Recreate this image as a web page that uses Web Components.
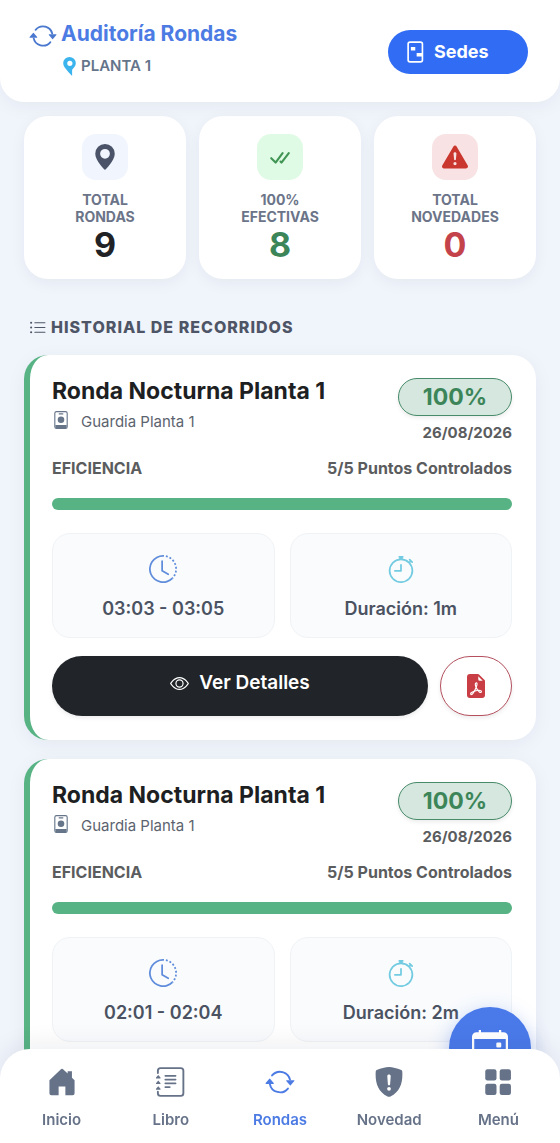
<!DOCTYPE html>
<html lang="es">
<head>
<meta charset="utf-8">
<meta name="viewport" content="width=device-width, initial-scale=1">
<title>Auditoría Rondas</title>
<style>
  html, body { margin: 0; height: 100%; }
  body { font-family: Inter, "Liberation Sans", sans-serif; background: #f0f4fb; color: #212529; }
</style>
</head>
<body>
<audit-app></audit-app>
<script>
const ICONS = {
  repeat: '<path d="M11.534 7h3.932a.25.25 0 0 1 .192.41l-1.966 2.36a.25.25 0 0 1-.384 0l-1.966-2.36a.25.25 0 0 1 .192-.41m-11 2h3.932a.25.25 0 0 0 .192-.41L2.692 6.23a.25.25 0 0 0-.384 0L.342 8.59A.25.25 0 0 0 .534 9"/><path d="M8 3c-1.552 0-2.94.707-3.857 1.818a.5.5 0 1 1-.771-.636A6.002 6.002 0 0 1 13.917 7H12.9A5 5 0 0 0 8 3M3.1 9a5.002 5.002 0 0 0 8.757 2.182.5.5 0 1 1 .771.636A6.002 6.002 0 0 1 2.083 9z"/>',
  pin: '<path d="M8 16s6-5.686 6-10A6 6 0 0 0 2 6c0 4.314 6 10 6 10m0-7a3 3 0 1 1 0-6 3 3 0 0 1 0 6"/>',
  flagpin: '<path fill-rule="evenodd" d="M8 0a5.300 5.300 0 0 1 5.300 5.300c0 2.300-1.700 4-3.100 5.400V16L7 12.600C4.700 9.800 2.700 8 2.700 5.300A5.300 5.300 0 0 1 8 0m.3 3.100a2.200 2.200 0 1 0 0 4.400 2.200 2.200 0 0 0 0-4.400"/>',
  door: '<rect x="3" y=".8" width="10.400" height="14.400" rx="1.400" fill="none" stroke="currentColor" stroke-width="1.200"/><path d="M5 4.300h3.200v2.600H5zM9.200 8.700h4v2.600h-4z"/>',
  checks: '<path d="M2.600 8.700 5.300 11.400 9.600 5.600M8.300 10.800 8.900 11.400 13.400 5.600" fill="none" stroke="currentColor" stroke-width="1.300" stroke-linecap="round" stroke-linejoin="round"/>',
  warning: '<path d="M8.982 1.566a1.130 1.130 0 0 0-1.960 0L.165 13.233c-.457.778.091 1.767.980 1.767h13.713c.889 0 1.438-.990.980-1.767zM8 5c.535 0 .954.462.900.995l-.350 3.507a.552.552 0 0 1-1.100 0L7.100 5.995A.905.905 0 0 1 8 5m.002 6a1 1 0 1 1 0 2 1 1 0 0 1 0-2"/>',
  list: '<path d="M5.500 3.500h9.500M5.500 8h9.500M5.500 12.500h9.500" fill="none" stroke="currentColor" stroke-width="1" stroke-linecap="round"/><circle cx="2" cy="3.500" r="1"/><circle cx="2" cy="8" r="1"/><circle cx="2" cy="12.500" r="1"/>',
  badge: '<rect x="2.500" y=".5" width="11" height="15" rx="1.500" fill="none" stroke="currentColor"/><path d="M6 2h4v1H6zM3 12.400h10V14a1.500 1.500 0 0 1-1.500 1.500h-7A1.500 1.500 0 0 1 3 14z"/><circle cx="8" cy="7.800" r="2.900"/>',
  clock: '<path d="M8.515 1.019A7 7 0 0 0 8 1V0a8 8 0 0 1 .589.022zm2.004.45a7 7 0 0 0-.985-.299l.219-.976q.576.129 1.126.342zm1.37.71a7 7 0 0 0-.439-.27l.493-.87a8 8 0 0 1 .979.654l-.615.789a7 7 0 0 0-.418-.302zm1.834 1.79a7 7 0 0 0-.653-.796l.724-.69q.406.429.747.91zm.744 1.352a7 7 0 0 0-.214-.468l.893-.45a8 8 0 0 1 .45 1.088l-.95.313a7 7 0 0 0-.179-.483m.53 2.507a7 7 0 0 0-.1-1.025l.985-.17q.1.58.116 1.17zm-.131 1.538q.05-.254.081-.51l.993.123a8 8 0 0 1-.23 1.155l-.964-.267q.069-.247.12-.501m-.952 2.379q.276-.436.486-.908l.914.405q-.24.54-.555 1.038zm-.964 1.205q.183-.183.35-.378l.758.653a8 8 0 0 1-.401.432z"/><path d="M8 1a7 7 0 1 0 4.950 11.950l.707.707A8.001 8.001 0 1 1 8 0z"/><path d="M7.500 3a.5.5 0 0 1 .5.5v5.210l3.248 1.856a.5.5 0 0 1-.496.868l-3.500-2A.5.5 0 0 1 7 9V3.500a.5.5 0 0 1 .5-.5"/>',
  stopwatch: '<path d="M8.500 5.600a.5.5 0 1 0-1 0v2.900h-3a.5.5 0 0 0 0 1H8a.5.5 0 0 0 .5-.5z"/><path d="M6.500 1A.5.5 0 0 1 7 .5h2a.5.5 0 0 1 0 1v.57c1.360.196 2.594.78 3.584 1.640l.012-.013.354-.354-.354-.353a.5.5 0 0 1 .707-.708l1.414 1.415a.5.5 0 1 1-.707.707l-.353-.354-.354.354-.013.012A7 7 0 1 1 7 2.071V1.500a.5.5 0 0 1-.5-.5M8 3a6 6 0 1 0 .001 12A6 6 0 0 0 8 3"/>',
  eye: '<path d="M16 8s-3-5.500-8-5.500S0 8 0 8s3 5.500 8 5.500S16 8 16 8M1.173 8a13 13 0 0 1 1.660-2.043C4.120 4.668 5.880 3.500 8 3.500s3.879 1.168 5.168 2.457A13 13 0 0 1 14.828 8q-.086.13-.195.288c-.335.48-.83 1.120-1.465 1.755C11.879 11.332 10.119 12.500 8 12.500s-3.879-1.168-5.168-2.457A13 13 0 0 1 1.172 8z"/><path d="M8 5.500a2.500 2.500 0 1 0 0 5 2.500 2.500 0 0 0 0-5M4.500 8a3.500 3.500 0 1 1 7 0 3.500 3.500 0 0 1-7 0"/>',
  pdf: '<path d="M5.523 12.424q.21-.124.459-.238a8 8 0 0 1-.45.606c-.28.337-.498.516-.635.572l-.035.012a.3.3 0 0 1-.026-.044c-.056-.11-.054-.216.04-.36.106-.165.319-.354.647-.548m2.455-1.647q-.178.037-.356.078a21 21 0 0 0 .5-1.050 12 12 0 0 0 .51.858q-.326.048-.654.114m2.525.939a4 4 0 0 1-.435-.41q.344.007.612.054c.317.057.466.147.518.209a.1.1 0 0 1 .026.064.44.44 0 0 1-.06.2.3.3 0 0 1-.094.124.1.1 0 0 1-.069.015c-.09-.003-.258-.066-.498-.256M8.278 6.970c-.04.244-.108.524-.2.829a5 5 0 0 1-.089-.346c-.076-.353-.087-.63-.046-.822.038-.177.11-.248.196-.283a.5.5 0 0 1 .145-.04c.013.03.028.092.032.198q.008.183-.038.465z"/><path fill-rule="evenodd" d="M4 0h5.293A1 1 0 0 1 10 .293L13.707 4a1 1 0 0 1 .293.707V14a2 2 0 0 1-2 2H4a2 2 0 0 1-2-2V2a2 2 0 0 1 2-2m5.500 1.500v2a1 1 0 0 0 1 1h2zM4.165 13.668c.09.18.23.343.438.419.207.075.412.04.58-.03.318-.13.635-.436.926-.786.333-.401.683-.927 1.021-1.510a11.700 11.700 0 0 1 1.997-.406c.3.383.61.713.91.95.28.22.603.403.934.417a.86.86 0 0 0 .51-.138c.155-.101.27-.247.354-.416.09-.181.145-.37.138-.563a.84.84 0 0 0-.2-.518c-.226-.27-.596-.4-.96-.465a5.800 5.800 0 0 0-1.335-.05 11 11 0 0 1-.98-1.686c.25-.66.437-1.284.52-1.794.036-.218.055-.426.048-.614a1.240 1.240 0 0 0-.127-.538.7.7 0 0 0-.477-.365c-.202-.043-.41 0-.601.077-.377.15-.576.47-.651.823-.073.34-.04.736.046 1.136.088.406.238.848.43 1.295a20 20 0 0 1-1.062 2.227 7.700 7.700 0 0 0-1.482.645c-.37.22-.699.48-.897.787-.21.326-.275.714-.08 1.103"/>',
  house: '<path d="M7.300 1.300a1 1 0 0 1 1.400 0L11 3.500V2.300h2.300v3.400l1.400 1.400V14a1 1 0 0 1-1 1H9.800v-4.600H6.200V15H2.300a1 1 0 0 1-1-1V7.100z"/>',
  journal: '<g transform="translate(-.8)"><g fill="none" stroke="currentColor" stroke-width="1" stroke-linecap="round"><path d="M1.800 3.200V2A1.400 1.400 0 0 1 3.200.6H14A1.400 1.400 0 0 1 15.400 2v12A1.400 1.400 0 0 1 14 15.400H3.200A1.400 1.400 0 0 1 1.800 14v-.8M5.800 4.700h5.400M5.800 6.700h5.400M5.800 8.700h5.400M5.800 10.700h2.300"/></g><path d="M.8 5.600 2 4.200l1.200 1.400v.5H.8zM.8 8.600 2 7.200l1.200 1.400v.5H.8zM.8 11.600 2 10.200l1.200 1.400v.5H.8z"/></g>',
  shield: '<path fill-rule="evenodd" d="M8 0c2 .1 4.500.7 6.200 1.400.6.200.9.600.9 1.200.3 6-1.300 10.500-6.300 13.100a1.600 1.600 0 0 1-1.600 0C2.200 13.100.6 8.600.9 2.600c0-.6.300-1 .9-1.200C3.500.7 6 .1 8 0m0 4c-.6 0-1 .4-.9 1l.3 4.200c.1.800 1.100.8 1.200 0L8.900 5c.1-.6-.3-1-.9-1m0 6.600a1 1 0 1 0 0 2 1 1 0 0 0 0-2"/>',
  grid: '<rect x="1.200" y="1.200" width="6" height="6" rx="1.200"/><rect x="8.900" y="1.200" width="6" height="6" rx="1.200"/><rect x="1.200" y="8.900" width="6" height="6" rx="1.200"/><rect x="8.900" y="8.900" width="6" height="6" rx="1.200"/>',
  calendar: '<path fill-rule="evenodd" d="M3 0h1v1h8V0h1v1h1a2 2 0 0 1 2 2v11a2 2 0 0 1-2 2H2a2 2 0 0 1-2-2V3a2 2 0 0 1 2-2h1zM1 4v10a1 1 0 0 0 1 1h12a1 1 0 0 0 1-1V4z"/><rect x="10.800" y="5.600" width="2.200" height="2.200" rx=".5"/>'
};

class Base extends HTMLElement {
  connectedCallback() {
    if (this.shadowRoot) return;
    this.attachShadow({ mode: 'open' }).innerHTML = '<style>*{box-sizing:border-box}' + this.css() + '</style>' + this.html();
  }
  a(name) { return this.getAttribute(name) || ''; }
}

customElements.define('ui-icon', class extends Base {
  css() { return ':host{display:inline-block;flex:none;width:16px;height:16px}svg{display:block;width:100%;height:100%}'; }
  html() { return `<svg viewBox="0 0 16 16" fill="currentColor" aria-hidden="true">${ICONS[this.a('name')]}</svg>`; }
});

customElements.define('app-header', class extends Base {
  css() { return `
    :host{display:block;position:relative;z-index:2;flex:none}
    header{display:flex;justify-content:space-between;align-items:center;padding:22px 32px 20px 29px;background:#fff;border-radius:0 0 24px 24px;box-shadow:0 4px 20px rgba(20,30,50,.05)}
    .brand{padding-bottom:6px}
    h1{display:flex;align-items:center;gap:4px;height:24px;margin:0;font-size:21px;line-height:24px;font-weight:700;color:#4c7be4}
    h1 ui-icon{width:28px;height:28px;color:#4a78cf;margin-top:4px}
    p{display:flex;align-items:center;gap:2px;margin:10px 0 0;padding-left:31px;font-size:15px;line-height:20px;font-weight:600;color:#64748b}
    p ui-icon{width:19px;height:19px;color:#3bb4ee}
    button{display:flex;align-items:center;gap:8px;height:44px;width:140px;padding:0 16px;border:0;border-radius:22px;background:#306df4;color:#fff;font:700 18px/24px Inter,sans-serif}
    button ui-icon{width:22px;height:22px}`; }
  html() { return `<header><div class="brand"><h1><ui-icon name="repeat"></ui-icon>Auditoría Rondas</h1>
    <p><ui-icon name="flagpin"></ui-icon>PLANTA 1</p></div>
    <button type="button"><ui-icon name="door"></ui-icon>Sedes</button></header>`; }
});

customElements.define('stat-card', class extends Base {
  css() { return `
    :host{display:flex;flex-direction:column;align-items:center;padding:18px 12px 14px;border-radius:24px;background:#fff;box-shadow:0 4px 16px rgba(20,30,50,.05);text-align:center}
    .tile{display:grid;place-items:center;width:46px;height:46px;border-radius:14px;background:var(--tile);color:var(--ink)}
    .tile ui-icon{width:26px;height:26px}
    .label{margin-top:11px;font-size:14px;line-height:17px;font-weight:700;color:#6b7488}
    .label span{display:block}
    strong{font-size:34px;line-height:40px;font-weight:700;color:var(--value)}`; }
  html() { return `<div class="tile"><ui-icon name="${this.a('icon')}"></ui-icon></div>
    <div class="label"><span>${this.a('top')}</span><span>${this.a('bottom')}</span></div><strong><slot></slot></strong>`; }
});

customElements.define('metric-box', class extends Base {
  css() { return `
    :host{display:flex;flex-direction:column;align-items:center;padding:21px 8px 16px;border:1px solid #f0f3f6;border-radius:18px;background:#f9fbfd;color:#4b5261;font-size:18px;line-height:24px;font-weight:600}
    ui-icon{width:28px;height:28px;margin-bottom:14px;color:var(--ink)}`; }
  html() { return `<ui-icon name="${this.a('icon')}"></ui-icon><span><slot></slot></span>`; }
});

customElements.define('round-card', class extends Base {
  css() { return `
    :host{display:block;padding:23px 24px 24px 22px;border-left:6px solid #57b384;border-radius:24px;background:#fff;box-shadow:0 4px 20px rgba(20,30,50,.05)}
    .top,.line,.times,.actions{display:flex;justify-content:space-between}
    h3{margin:0;font-size:23px;line-height:26px;font-weight:700;color:#1d1f22}
    .guard{display:flex;align-items:center;gap:11px;margin-top:7px;font-size:15px;line-height:22px;color:#5c636e}
    .guard ui-icon{width:18px;height:18px;color:#66758a;margin-bottom:4px}
    .side{display:flex;flex-direction:column;align-items:flex-end}
    .pill{display:flex;align-items:center;justify-content:center;width:114px;height:38px;border:1px solid #478b6a;border-radius:19px;background:#d5e7df;color:#3c8559;font-size:23px;font-weight:700;box-shadow:0 2px 4px rgba(0,0,0,.08)}
    .date{margin-top:7px;font-size:15px;line-height:20px;font-weight:700;color:#5b5c5e}
    .line{margin-top:13px;font-size:16px;line-height:24px;font-weight:700;color:#5b5c5e}
    progress{display:block;appearance:none;width:100%;height:12px;margin:18px 0 23px;border:0;border-radius:6px;overflow:hidden;background:#e9ecef}
    progress::-webkit-progress-bar{background:#e9ecef}
    progress::-webkit-progress-value{background:#57b384}
    .times{gap:15px}.times metric-box{flex:1}
    .actions{gap:12px;margin-top:18px}
    button{height:60px;border-radius:30px;box-shadow:0 2px 4px rgba(0,0,0,.08)}
    .view{display:flex;align-items:center;justify-content:center;gap:10px;flex:1;border:0;padding:0 0 6px;background:#212529;color:#fff;font:600 19px/24px Inter,sans-serif}
    .view ui-icon{width:19px;height:19px}
    .pdf{display:grid;place-items:center;width:72px;padding:0;border:1px solid #b5505f;background:#fff;color:#c93d44}
    .pdf ui-icon{width:24px;height:24px}`; }
  html() { return `<div class="top"><div><h3>Ronda Nocturna Planta 1</h3>
      <div class="guard"><ui-icon name="badge"></ui-icon>Guardia Planta 1</div></div>
      <div class="side"><span class="pill">100%</span><span class="date">26/08/2026</span></div></div>
    <div class="line"><span>EFICIENCIA</span><span>5/5 Puntos Controlados</span></div>
    <progress value="5" max="5" aria-label="Eficiencia"></progress>
    <div class="times"><metric-box icon="clock" style="--ink:#5f8cdb">${this.a('hours')}</metric-box>
      <metric-box icon="stopwatch" style="--ink:#72cbe1">Duración: ${this.a('duration')}</metric-box></div>
    <div class="actions"><button class="view" type="button"><ui-icon name="eye"></ui-icon>Ver Detalles</button>
      <button class="pdf" type="button" aria-label="PDF"><ui-icon name="pdf"></ui-icon></button></div>`; }
});

customElements.define('nav-item', class extends Base {
  css() { return `
    :host{display:block;flex:1}
    a{display:flex;flex-direction:column;align-items:center;gap:13px;color:var(--ink,#667288);text-decoration:none;font-size:15px;line-height:20px;font-weight:600}
    ui-icon{width:30px;height:30px}`; }
  html() { return `<a href="#${this.a('icon')}"><ui-icon name="${this.a('icon')}"></ui-icon><slot></slot></a>`; }
});

customElements.define('bottom-nav', class extends Base {
  css() { return `
    :host{display:block;position:fixed;inset:auto 0 0;z-index:4}
    nav{display:flex;padding:18px 7px 13px;border-radius:30px 30px 0 0;background:#fff;box-shadow:0 -5px 24px rgba(20,30,50,.07)}`; }
  html() { return '<nav aria-label="Principal"><slot></slot></nav>'; }
});

customElements.define('calendar-fab', class extends Base {
  css() { return `
    :host{display:block;position:fixed;right:29px;bottom:54px;z-index:3}
    button{display:grid;place-items:center;width:82px;height:82px;padding:0;border:0;border-radius:50%;background:#4a7aea;color:#fff;box-shadow:0 6px 20px rgba(74,122,234,.4)}
    ui-icon{width:36px;height:36px}`; }
  html() { return '<button type="button" aria-label="Calendario"><ui-icon name="calendar"></ui-icon></button>'; }
});

customElements.define('audit-app', class extends Base {
  css() { return `
    :host{display:flex;flex-direction:column;height:100vh}
    main{flex:1;min-height:0;overflow:hidden auto;scrollbar-width:none;padding:14px 24px 120px}
    .stats{display:grid;grid-template-columns:repeat(3,1fr);gap:13px}
    h2{display:flex;align-items:center;gap:5px;margin:36px 5px 16px;font-size:16px;line-height:24px;font-weight:800;color:#4e5566;letter-spacing:1px}
    h2 ui-icon{width:17px;height:17px}
    .rounds{display:grid;gap:19px}`; }
  html() { return `<app-header></app-header>
    <main><section class="stats">
      <stat-card icon="pin" top="TOTAL" bottom="RONDAS" style="--tile:#f1f5fd;--ink:#4a5368;--value:#212226">9</stat-card>
      <stat-card icon="checks" top="100%" bottom="EFECTIVAS" style="--tile:#e0fbe5;--ink:#409554;--value:#3c8559">8</stat-card>
      <stat-card icon="warning" top="TOTAL" bottom="NOVEDADES" style="--tile:#f8e2e3;--ink:#c9372f;--value:#c4434b">0</stat-card>
    </section>
    <h2><ui-icon name="list"></ui-icon>HISTORIAL DE RECORRIDOS</h2>
    <section class="rounds"><round-card hours="03:03 - 03:05" duration="1m"></round-card>
      <round-card hours="02:01 - 02:04" duration="2m"></round-card></section></main>
    <calendar-fab></calendar-fab>
    <bottom-nav><nav-item icon="house">Inicio</nav-item><nav-item icon="journal">Libro</nav-item>
      <nav-item icon="repeat" style="--ink:#4c7be4">Rondas</nav-item><nav-item icon="shield">Novedad</nav-item>
      <nav-item icon="grid">Menú</nav-item></bottom-nav>`; }
});
</script>
</body>
</html>
